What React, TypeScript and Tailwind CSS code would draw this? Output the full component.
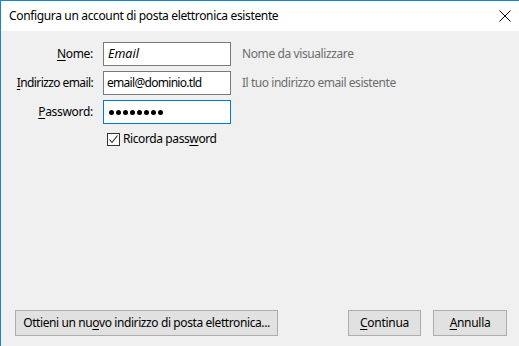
import React from "react";

const U = ({ children }: { children: React.ReactNode }) => (
  <span className="underline underline-offset-2 decoration-1">{children}</span>
);

export default function App() {
  const dots = [0, 1, 2, 3, 4, 5, 6, 7];
  return (
    <div
      className="w-[519px] h-[346px] bg-[#f0f0f0] border-l border-t border-[#1883d7] flex flex-col text-[12px] tracking-[-0.3px] text-black overflow-hidden"
      style={{ fontFamily: '"Noto Sans", "Segoe UI", sans-serif' }}
    >
      <div className="h-[30px] bg-white flex items-center justify-between pl-[8px] pr-[8px] shrink-0">
        <span className="text-[12px] tracking-[-0.35px]">Configura un account di posta elettronica esistente</span>
        <svg width="12" height="12" viewBox="0 0 12 12">
          <path d="M0.5 0.5 L11.5 11.5 M11.5 0.5 L0.5 11.5" stroke="#000" strokeWidth="1" />
        </svg>
      </div>
      <div className="flex-1 flex flex-col">
        <div className="pt-[11px] grid grid-cols-[92px_128px_auto] gap-x-[10px] gap-y-[5px] items-center">
          <div className="text-right whitespace-nowrap">
            <U>N</U>ome:
          </div>
          <div className="h-[24px] bg-white border border-[#7a7a7a] flex items-center px-[4px] italic text-[12.5px] tracking-[0px]">
            Email
          </div>
          <div className="pl-[1px] text-[#6d6d6d] whitespace-nowrap tracking-[-0.4px]">Nome da visualizzare</div>

          <div className="text-right whitespace-nowrap tracking-[-0.6px]">
            <U>I</U>ndirizzo email:
          </div>
          <div className="h-[24px] bg-white border border-[#7a7a7a] flex items-center px-[3px] text-[12px] tracking-[-0.7px] whitespace-nowrap">
            email@dominio.tld
          </div>
          <div className="pl-[1px] text-[#6d6d6d] whitespace-nowrap tracking-[-0.45px]">Il tuo indirizzo email esistente</div>

          <div className="text-right whitespace-nowrap">
            <U>P</U>assword:
          </div>
          <div className="h-[24px] bg-white border border-[#0078d7] flex items-center pl-[5px] gap-[2px]">
            {dots.map((d) => (
              <span key={d} className="w-[5px] h-[5px] rounded-full bg-black" />
            ))}
          </div>
          <div />
        </div>
        <div className="flex items-center mt-[6px] ml-[106px]">
          <div className="w-[13px] h-[13px] border border-[#333] bg-white flex items-center justify-center">
            <svg width="11" height="11" viewBox="0 0 11 11">
              <path d="M1.5 5.5 L4 8.5 L9.5 1.5" stroke="#222" strokeWidth="1.1" fill="none" />
            </svg>
          </div>
          <span className="ml-[3px] whitespace-nowrap tracking-[-0.4px]">
            Ricorda pass<U>w</U>ord
          </span>
        </div>
        <div className="flex-1" />
        <div className="flex items-center pl-[14px] pr-[12px] pb-[10px]">
          <button className="h-[26px] w-[263px] bg-[#e1e1e1] border border-[#adadad] text-center whitespace-nowrap tracking-[-0.4px]">
            <span>
              Ottieni un nu<U>o</U>vo indirizzo di posta elettronica...
            </span>
          </button>
          <div className="flex-1" />
          <button className="h-[26px] w-[73px] bg-[#e1e1e1] border border-[#adadad] text-center whitespace-nowrap">
            <span>
              <U>C</U>ontinua
            </span>
          </button>
          <button className="h-[26px] w-[74px] ml-[12px] bg-[#e1e1e1] border border-[#adadad] text-center whitespace-nowrap">
            <span>
              <U>A</U>nnulla
            </span>
          </button>
        </div>
      </div>
    </div>
  );
}
